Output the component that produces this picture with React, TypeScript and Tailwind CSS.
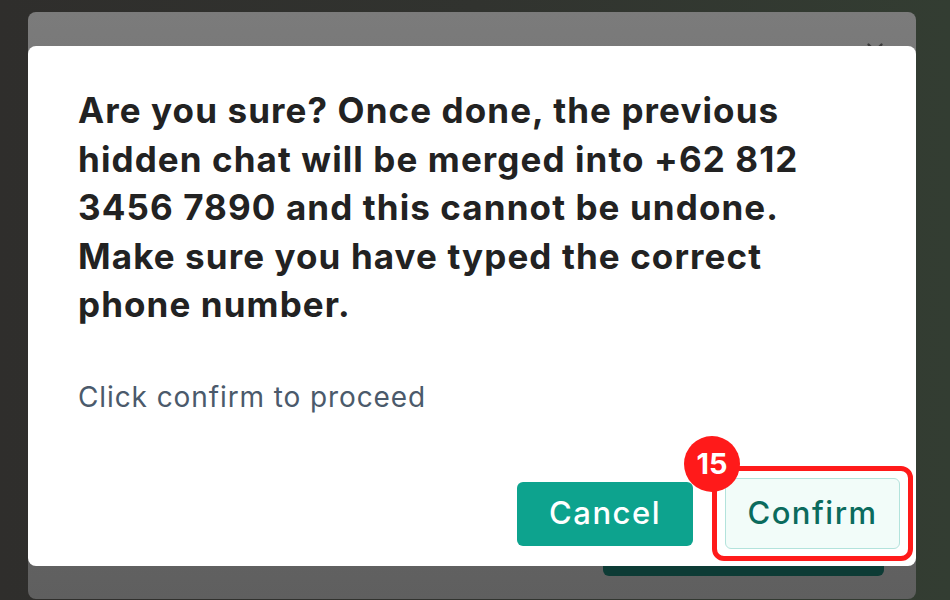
import { X } from 'lucide-react';

export default function App() {
  return (
    <div
      className="h-[600px] w-[950px] overflow-hidden bg-gradient-to-r from-[#2f2e2c] via-[#31332f] to-[#333d32] px-[34px] pt-[12px]"
      style={{ fontFamily: 'Inter, "Noto Sans", sans-serif' }}
    >
      {/* modal underneath */}
      <div className="relative ml-[-6px] flex h-[587px] w-[888px] flex-col rounded-lg bg-gradient-to-b from-[#7b7b7b] to-[#5f5f5f]">
        <div className="flex justify-end pr-[28px] pt-[26px]">
          <X className="text-[#3b3b3b]" size={26} strokeWidth={2.2} />
        </div>
        <div className="mt-auto flex justify-end pb-[23px] pr-[32px]">
          <div className="h-[40px] w-[281px] rounded-md bg-[#0d3b35]" />
        </div>

        {/* confirmation dialog on top */}
        <div className="absolute inset-x-0 top-[34px] flex h-[520px] flex-col rounded-lg bg-white pb-[17px] pl-[50px] pr-[16px] pt-[40px]">
          <p className="text-[35px] font-bold leading-[48.5px] tracking-[1.1px] text-[#222222]">
            Are you sure? Once done, the previous
            <br />
            hidden chat will be merged into +62 812
            <br />
            3456 7890 and this cannot be undone.
            <br />
            Make sure you have typed the correct
            <br />
            phone number.
          </p>

          <p className="mt-[50px] text-[28px] leading-[36px] tracking-[0.9px] text-[#4b5a6b]">Click confirm to proceed</p>

          <div className="mt-auto flex items-center justify-end gap-[32px]">
            <button className="flex h-[64px] w-[176px] items-center justify-center rounded-md bg-[#0da38e] text-[31px] font-medium tracking-[1.5px] text-white">
              Cancel
            </button>

            <div className="relative">
              <button className="flex h-[71px] w-[175px] items-center justify-center rounded-md border border-[#b3e3dc] bg-[#f2fcf9] text-[31px] font-medium tracking-[1.5px] text-[#0b6b5d]">
                Confirm
              </button>
              <div className="pointer-events-none absolute -bottom-[12px] -left-[13px] -right-[13px] -top-[12px] rounded-xl border-[5px] border-[#ff1a1a]" />
              <div className="absolute -left-[41px] -top-[42px] flex h-[56px] w-[56px] items-center justify-center rounded-full bg-[#ff1a1a] text-[29px] font-bold text-white">
                15
              </div>
            </div>
          </div>
        </div>
      </div>
    </div>
  );
}
